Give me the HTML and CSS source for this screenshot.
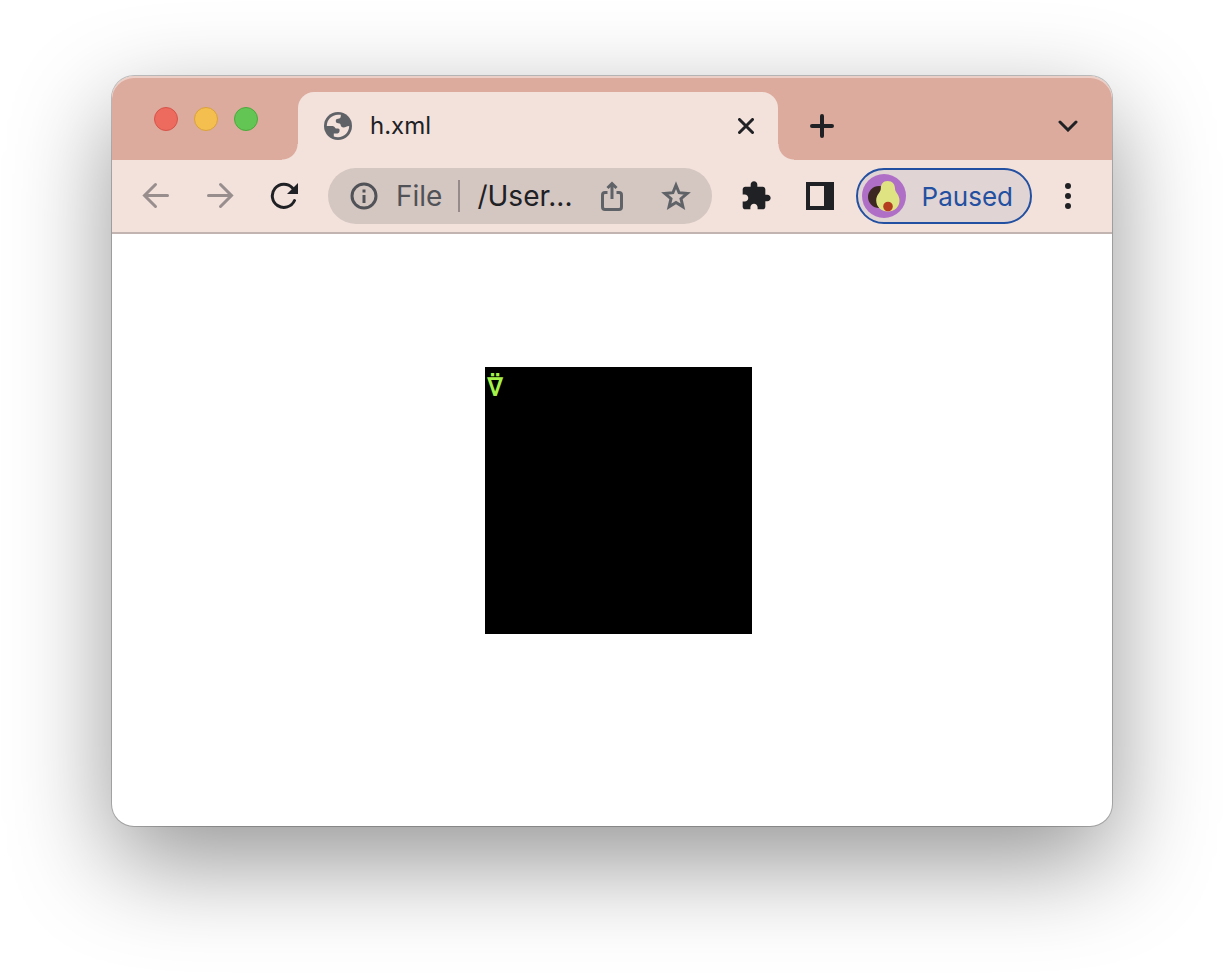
FILE: index.html
```html
<!DOCTYPE html>
<html lang="en">
<head>
    <meta charset="UTF-8">
    <meta name="viewport" content="width=device-width, initial-scale=1.0">
    <title>h.xml</title>
    <link rel="stylesheet" href="styles.css">
</head>
<body>
    <div class="window">
        <header class="tab-strip">
            <div class="traffic-lights">
                <button class="light close" aria-label="Close window"></button>
                <button class="light minimize" aria-label="Minimize window"></button>
                <button class="light maximize" aria-label="Maximize window"></button>
            </div>
            <div class="tab">
                <svg class="favicon" viewBox="0 0 28 28" aria-hidden="true">
                    <circle cx="14" cy="14" r="14" fill="#5f6368"/>
                    <path fill="#f3e1db" d="M2.800 14C2.800 7.800 7.800 2.800 14 2.800H16.800V4C16.800 5.800 15.800 6.800 14 6.800C12.600 6.800 11.800 7.600 11.800 9C11.800 10.600 12.800 11.200 14.200 11.200C16 11.200 16.600 12 16.800 13.600C17 14.800 17.800 15.400 19.600 15.400C21.800 15.400 22.400 14 25.200 14C25.200 20.200 20.200 25.200 14 25.200C12.400 25.200 11 24.900 9.800 24.400V21.600H12C14.200 21.600 15.600 20.600 15.600 18.400C15.600 16.800 14.600 16.600 12.600 16.600C10.800 16.600 11 14 8 14Z"/>
                </svg>
                <span class="tab-title">h.xml</span>
                <button class="tab-close" aria-label="Close tab">
                    <svg width="16" height="16" viewBox="0 0 16 16"><path d="M1.500 1.500 14.500 14.500M14.500 1.500 1.500 14.500"/></svg>
                </button>
            </div>
            <button class="new-tab" aria-label="New tab">
                <svg width="24" height="24" viewBox="0 0 24 24"><path d="M12 2V22M2 12H22"/></svg>
            </button>
            <button class="tab-search" aria-label="Search tabs">
                <svg width="20" height="12" viewBox="0 0 20 12"><path d="M2 2 10 10 18 2"/></svg>
            </button>
        </header>

        <nav class="toolbar">
            <button class="icon-btn muted" aria-label="Back">
                <svg width="28" height="28" viewBox="0 0 28 28"><path d="M25.500 13.500H3M13.500 2.500 2.500 13.500 13.500 24.500"/></svg>
            </button>
            <button class="icon-btn muted" aria-label="Forward">
                <svg width="28" height="28" viewBox="0 0 28 28"><path d="M2.500 13.500H25M14.500 2.500 25.500 13.500 14.500 24.500"/></svg>
            </button>
            <button class="icon-btn" aria-label="Reload">
                <svg width="28" height="28" viewBox="0 0 28 28">
                    <path d="M24.500 18.500A11.600 11.600 0 1 1 22.500 6"/>
                    <path class="solid" d="M28 1V12H17Z"/>
                </svg>
            </button>

            <form class="omnibox">
                <svg class="info" width="28" height="28" viewBox="0 0 28 28" aria-hidden="true">
                    <circle cx="14" cy="14" r="12"/>
                    <path d="M14 13V21M14 7.500V10.500"/>
                </svg>
                <label class="scheme" for="address">File</label>
                <input class="address" id="address" type="text" value="/User...">
                <button class="icon-btn share" type="button" aria-label="Share">
                    <svg width="24" height="32" viewBox="0 0 24 32">
                        <path d="M7.500 12.500H5A2.500 2.500 0 0 0 2.500 15V27A2.500 2.500 0 0 0 5 29.500H19A2.500 2.500 0 0 0 21.500 27V15A2.500 2.500 0 0 0 19 12.500H16.500M12 19V4M7.500 8 12 3.500 16.500 8"/>
                    </svg>
                </button>
                <button class="icon-btn star" type="button" aria-label="Bookmark this tab">
                    <svg width="32" height="32" viewBox="0 0 32 32">
                        <path d="M16 5.200 19.100 12.700 27.200 13.400 21 18.700 22.900 26.700 16 22.400 9.100 26.700 11 18.700 4.800 13.400 12.900 12.700Z"/>
                    </svg>
                </button>
            </form>

            <button class="icon-btn" aria-label="Extensions">
                <svg width="32" height="32" viewBox="0 0 24 24">
                    <path class="solid" d="M20.500 11H19V7c0-1.100-.9-2-2-2h-4V3.500C13 2.120 11.880 1 10.500 1S8 2.120 8 3.500V5H4c-1.100 0-1.990.9-1.990 2v3.800H3.500c1.490 0 2.700 1.210 2.700 2.700s-1.210 2.700-2.700 2.700H2V20c0 1.100.9 2 2 2h3.800v-1.500c0-1.490 1.210-2.700 2.700-2.700s2.700 1.210 2.700 2.700V22H17c1.100 0 2-.9 2-2v-4h1.500c1.380 0 2.500-1.120 2.500-2.500S21.880 11 20.500 11z"/>
                </svg>
            </button>
            <button class="icon-btn" aria-label="Side panel">
                <svg width="28" height="28" viewBox="0 0 28 28">
                    <path class="solid" fill-rule="evenodd" d="M0 0H28V28H0ZM4 4V24H18V4Z"/>
                </svg>
            </button>
            <button class="profile">
                <svg class="avatar" width="44" height="44" viewBox="0 0 44 44" aria-hidden="true">
                    <circle cx="22" cy="22" r="22" fill="#b06fc6"/>
                    <ellipse cx="17" cy="23" rx="11" ry="11" fill="#3c2723"/>
                    <path fill="#dfe381" d="M25.500 7C21 7 18.800 10.500 18.800 14.500C18.800 18.500 14.200 20.500 14.200 26.500C14.200 33 19.500 37.500 25.800 37.500C32.500 37.500 37.500 33 37.500 26.500C37.500 20.500 33 18.500 33 14.500C33 10.500 30.500 7 25.500 7Z"/>
                    <circle cx="26" cy="32.500" r="4.800" fill="#b43c1f"/>
                </svg>
                <span>Paused</span>
            </button>
            <button class="icon-btn" aria-label="Menu">
                <svg width="8" height="28" viewBox="0 0 8 28">
                    <circle class="solid" cx="4" cy="4" r="3"/>
                    <circle class="solid" cx="4" cy="14" r="3"/>
                    <circle class="solid" cx="4" cy="24" r="3"/>
                </svg>
            </button>
        </nav>

        <main class="page">
            <div class="board">&#x2362;</div>
        </main>
    </div>
</body>
</html>
```
FILE: styles.css
```css
* {
    margin: 0;
    padding: 0;
    box-sizing: border-box;
}

body {
    font-family: Inter, Roboto, sans-serif;
    background: #fff;
    color: #202124;
    min-height: 100vh;
    display: flex;
    padding: 76px 112px 148px;
}

button {
    border: none;
    background: none;
    font: inherit;
    color: inherit;
    cursor: pointer;
}

svg {
    display: block;
    flex: none;
    fill: none;
    stroke: currentColor;
    stroke-width: 3px;
    stroke-linecap: round;
}

.solid {
    fill: currentColor;
    stroke: none;
}

.window {
    flex: 1;
    min-width: 0;
    display: flex;
    flex-direction: column;
    background: #fff;
    border-radius: 22px;
    overflow: hidden;
    box-shadow: 0 0 0 1px rgba(0, 0, 0, 0.22), 0 36px 100px rgba(0, 0, 0, 0.42);
}

/* Tab strip */
.tab-strip {
    display: flex;
    align-items: center;
    height: 84px;
    padding: 16px 16px 0 42px;
    background: #dcab9d;
    box-shadow: inset 0 2px 0 #ecd0c8;
    border-radius: 22px 22px 0 0;
}

.traffic-lights {
    display: flex;
    gap: 16px;
    width: 144px;
    padding-bottom: 14px;
}

.light {
    width: 24px;
    height: 24px;
    border-radius: 50%;
    border: 1px solid;
}

.light.close {
    background: #ed6a5e;
    border-color: #d6544a;
}

.light.minimize {
    background: #f5bf4f;
    border-color: #d9a13c;
}

.light.maximize {
    background: #62c554;
    border-color: #4ba93c;
}

.tab {
    position: relative;
    flex: 0 1 480px;
    display: flex;
    align-items: center;
    height: 68px;
    padding: 0 24px 0 26px;
    background: #f3e1db;
    border-radius: 16px 16px 0 0;
}

.tab::before,
.tab::after {
    content: "";
    position: absolute;
    bottom: 0;
    width: 16px;
    height: 16px;
}

.tab::before {
    right: 100%;
    background: radial-gradient(circle at 0 0, transparent 15px, #f3e1db 16px);
}

.tab::after {
    left: 100%;
    background: radial-gradient(circle at 100% 0, transparent 15px, #f3e1db 16px);
}

.favicon {
    width: 28px;
    height: 28px;
    stroke: none;
}

.tab-title {
    flex: 1;
    margin-left: 18px;
    font-size: 24px;
    line-height: 32px;
}

.new-tab {
    margin-left: 32px;
}

.new-tab svg {
    stroke-width: 4px;
}

.tab-search {
    margin-left: auto;
    padding: 0 18px;
}

/* Toolbar */
.toolbar {
    display: flex;
    align-items: center;
    gap: 8px;
    height: 74px;
    padding: 0 16px;
    background: #f3e1db;
    border-bottom: 2px solid #c2b4b1;
}

.icon-btn {
    flex: none;
    width: 56px;
    height: 56px;
    display: flex;
    align-items: center;
    justify-content: center;
}

.muted {
    color: #988e8d;
}

.omnibox {
    flex: 1;
    min-width: 0;
    display: flex;
    align-items: center;
    height: 56px;
    margin: 0 8px;
    padding: 0 8px 0 22px;
    background: #d4c6c1;
    border-radius: 28px;
    color: #5f6368;
    font-size: 28px;
}

.info {
    color: #505257;
    stroke-linecap: butt;
}

.scheme {
    margin-left: 18px;
    padding-right: 16px;
    border-right: 2px solid #968b8a;
    line-height: 32px;
    color: #505257;
}

.address {
    flex: 1;
    min-width: 0;
    margin: 0 8px 0 17px;
    border: none;
    outline: none;
    background: none;
    font: inherit;
    color: #202124;
}

.share svg {
    stroke-linecap: butt;
}

.star {
    margin-left: 8px;
}

.star svg {
    stroke-linecap: butt;
}

.profile {
    flex: none;
    display: flex;
    align-items: center;
    gap: 16px;
    height: 56px;
    padding: 0 17px 0 4px;
    border: 2px solid #2350a0;
    border-radius: 28px;
    background: #e1d4d5;
    color: #2350a0;
    font-size: 26px;
}

.avatar {
    stroke: none;
}

/* Document */
.page {
    flex: 1;
    display: flex;
    justify-content: center;
    align-items: flex-start;
    padding: 133px 0 0 13px;
}

.board {
    width: 267px;
    height: 267px;
    padding-left: 2px;
    background: #000;
    color: #a4f24a;
    font-family: "DejaVu Sans Mono", monospace;
    font-size: 27px;
    font-weight: bold;
    line-height: 40px;
}
```
